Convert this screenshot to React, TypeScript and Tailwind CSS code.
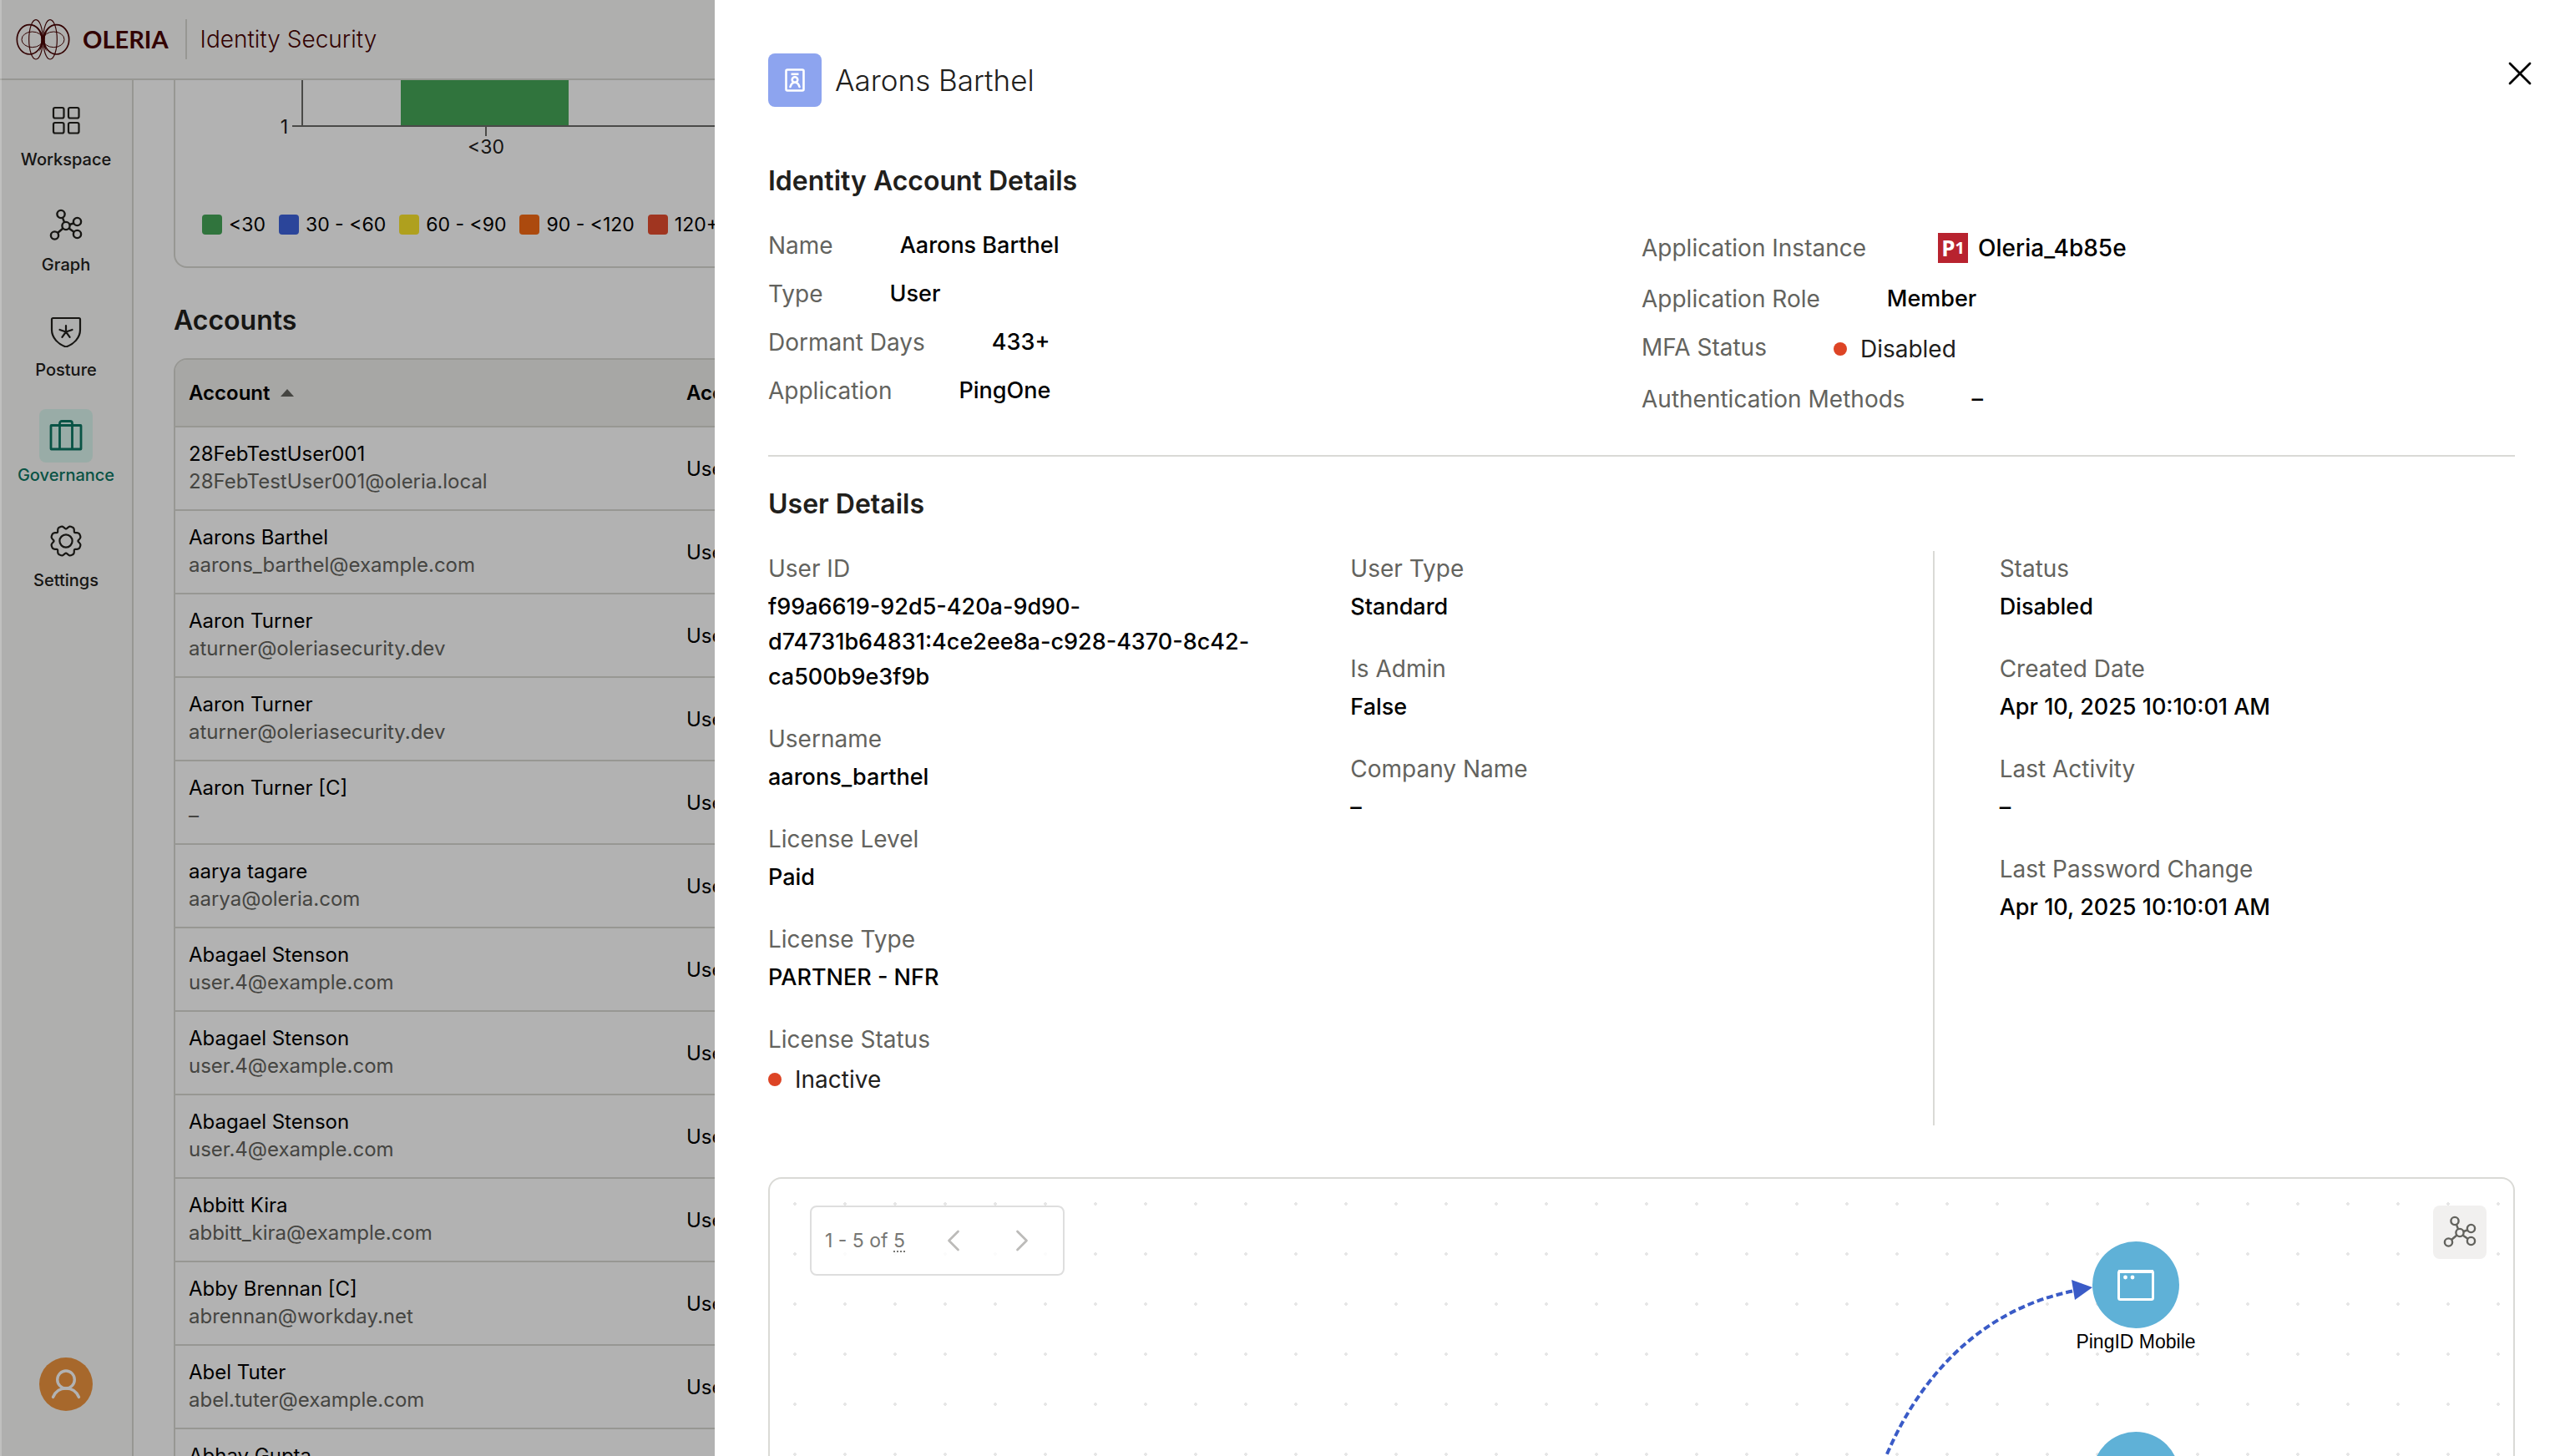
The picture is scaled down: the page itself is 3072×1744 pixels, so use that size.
import React from "react";
import { ChevronLeft, ChevronRight, X } from "lucide-react";

type IconProps = { className?: string };

function OleriaMark() {
  return (
    <svg viewBox="55 35 201 150" className="h-[50px] w-[67px]" fill="none" stroke="#490404" aria-hidden="true">
      <ellipse cx="107" cy="111" rx="45" ry="53" strokeWidth="5" />
      <ellipse cx="204" cy="111" rx="45" ry="53" strokeWidth="5" />
      <ellipse cx="117" cy="111" rx="38" ry="28" strokeWidth="3" />
      <ellipse cx="194" cy="111" rx="38" ry="28" strokeWidth="3" />
      <ellipse cx="130" cy="111" rx="25" ry="71" strokeWidth="3.5" />
      <ellipse cx="181" cy="111" rx="25" ry="71" strokeWidth="3.5" />
      <path d="M134 64C148 78 153 90 155.500 102C158 90 163 78 177 64C167 84 162 98 162 111C162 124 164 140 169 154C160 142 157 130 155.500 122C154 130 151 142 142 154C147 140 149 124 149 111C149 98 144 84 134 64Z" fill="#490404" stroke="none" />
    </svg>
  );
}

function WorkspaceIcon({ className }: IconProps) {
  return (
    <svg viewBox="0 0 40 40" className={className} fill="none" stroke="currentColor" strokeWidth="2.2">
      <rect x="5" y="5" width="12.500" height="12.500" rx="2" />
      <rect x="23" y="5" width="12.500" height="12.500" rx="2" />
      <rect x="5" y="23" width="12.500" height="12.500" rx="2" />
      <rect x="23" y="23" width="12.500" height="12.500" rx="2" />
    </svg>
  );
}

function GraphIcon({ className }: IconProps) {
  return (
    <svg viewBox="0 0 40 40" className={className} fill="none" stroke="currentColor" strokeWidth="2.4">
      <circle cx="14" cy="6.500" r="4.600" />
      <circle cx="20" cy="20.500" r="4.600" />
      <circle cx="33.500" cy="15.500" r="4.600" />
      <circle cx="33.500" cy="30.500" r="4.600" />
      <circle cx="6.500" cy="32" r="4.600" />
      <path d="M16 11l2 5M24.500 19l4.500-1.500M23.500 23.500l6 4.200M16.500 23.500L10 29" />
    </svg>
  );
}

function PostureIcon({ className }: IconProps) {
  return (
    <svg viewBox="0 0 40 40" className={className} fill="none" stroke="currentColor" strokeWidth="2.2" strokeLinecap="round" strokeLinejoin="round">
      <path d="M4.500 5H35.500a1.500 1.500 0 0 1 1.500 1.500V19C37 29 29 36.500 20 39.500C11 36.500 3 29 3 19V6.500A1.500 1.500 0 0 1 4.500 5Z" />
      <path d="M20 21.500V14M20 21.500l-7.500-2.500M20 21.500l7.500-2.500M20 21.500l-4.600 6.400M20 21.500l4.600 6.400" />
    </svg>
  );
}

function GovernanceIcon({ className }: IconProps) {
  return (
    <svg viewBox="0 0 40 40" className={className} fill="none" stroke="currentColor" strokeWidth="2.8" strokeLinejoin="round">
      <rect x="2" y="7.500" width="36" height="28.500" rx="0.500" />
      <path d="M12.500 36V5a2.500 2.500 0 0 1 2.500-2.500h10A2.500 2.500 0 0 1 27.500 5V36" />
    </svg>
  );
}

const gearOutline =
  "M" +
  Array.from({ length: 96 }, (_, i) => {
    const angle = (i / 96) * Math.PI * 2;
    const radius = 16.8 - 1.9 * Math.cos(8 * angle) - 0.5 * Math.cos(16 * angle);
    return `${(20 + radius * Math.cos(angle)).toFixed(2)} ${(20 + radius * Math.sin(angle)).toFixed(2)}`;
  }).join("L") +
  "Z";

function SettingsIcon({ className }: IconProps) {
  return (
    <svg viewBox="0 0 40 40" className={className} fill="none" stroke="currentColor" strokeWidth="2.200" strokeLinejoin="round">
      <path d={gearOutline} />
      <circle cx="20" cy="20" r="7.600" />
    </svg>
  );
}

function BadgeIcon({ className }: IconProps) {
  return (
    <svg viewBox="0 0 32 32" className={className} fill="none" stroke="white" strokeWidth="2.6" strokeLinecap="round">
      <rect x="5.500" y="3.500" width="21" height="25" rx="1.500" />
      <path d="M11.500 8.800h9" strokeLinecap="butt" />
      <circle cx="16" cy="15.500" r="3.300" />
      <path d="M10.500 24c1-3.500 3-5.200 5.500-5.200s4.500 1.700 5.500 5.200" />
    </svg>
  );
}

const navItems = [
  { label: "Workspace", Icon: WorkspaceIcon, active: false },
  { label: "Graph", Icon: GraphIcon, active: false },
  { label: "Posture", Icon: PostureIcon, active: false },
  { label: "Governance", Icon: GovernanceIcon, active: true },
  { label: "Settings", Icon: SettingsIcon, active: false },
];

const legend = [
  { label: "<30", color: "bg-[#46a658]" },
  { label: "30 - <60", color: "bg-[#3e63dd]" },
  { label: "60 - <90", color: "bg-[#fbe62c]" },
  { label: "90 - <120", color: "bg-[#f76b15]" },
  { label: "120+", color: "bg-[#e54d2e]" },
];

const accounts = [
  ["28FebTestUser001", "28FebTestUser001@oleria.local"],
  ["Aarons Barthel", "aarons_barthel@example.com"],
  ["Aaron Turner", "aturner@oleriasecurity.dev"],
  ["Aaron Turner", "aturner@oleriasecurity.dev"],
  ["Aaron Turner [C]", "–"],
  ["aarya tagare", "aarya@oleria.com"],
  ["Abagael Stenson", "user.4@example.com"],
  ["Abagael Stenson", "user.4@example.com"],
  ["Abagael Stenson", "user.4@example.com"],
  ["Abbitt Kira", "abbitt_kira@example.com"],
  ["Abby Brennan [C]", "abrennan@workday.net"],
  ["Abel Tuter", "abel.tuter@example.com"],
  ["Abhay Gupta", "abhay.gupta@example.com"],
];

function Header() {
  return (
    <header className="flex h-24 shrink-0 items-center border-b-2 border-[#d9d9d3] bg-[#fbfbf9] pl-[18px] text-[#490404]">
      <OleriaMark />
      <span className="ml-[14px] font-['Lato'] text-[29px] leading-10 font-bold">OLERIA</span>
      <span className="ml-5 h-12 w-0.5 bg-[#d9d9d3]" />
      <span className="ml-4 text-[28px] leading-10 font-light">Identity Security</span>
    </header>
  );
}

function Sidebar() {
  return (
    <nav className="flex w-40 shrink-0 flex-col items-center justify-between border-r-2 border-[#d9d9d3] bg-[#fbfbf9] pt-4 pb-[54px]">
      <ul className="flex flex-col gap-8">
        {navItems.map(({ label, Icon, active }) => (
          <li key={label}>
            <a href="#" className={`flex flex-col items-center ${active ? "text-[#0d7764]" : "text-[#21201c]"}`}>
              <span className={`flex size-16 items-center justify-center rounded-lg ${active ? "bg-[#dcf7ef]" : ""}`}>
                <Icon className="size-10" />
              </span>
              <span className="text-[20px] leading-[30px] font-medium">{label}</span>
            </a>
          </li>
        ))}
      </ul>
      <button aria-label="Profile" className="flex size-16 items-center justify-center rounded-full bg-[#f09640] text-white">
        <svg viewBox="0 0 40 40" className="size-10" fill="none" stroke="currentColor" strokeWidth="3.4" strokeLinecap="round">
          <ellipse cx="20" cy="14.500" rx="10.300" ry="10.500" />
          <path d="M4.500 35.500C7.500 28.500 13 25 20 25S32.500 28.500 35.500 35.500" />
        </svg>
      </button>
    </nav>
  );
}

function DormancyChart() {
  return (
    <section className="rounded-b-2xl border-2 border-t-0 border-[#d9d9d3] bg-white pb-[34px]">
      <svg className="block h-[157px] w-full" fill="none">
        <rect x="270" y="0" width="201" height="55" fill="#46a658" />
        <path d="M152 0V55M140 55H2600" stroke="#6b6b68" strokeWidth="2" />
        <path d="M372 56V67" stroke="#6b6b68" strokeWidth="2" />
        <text x="135" y="64" textAnchor="end" fontSize="23" fill="#21201c">1</text>
        <text x="372" y="88" textAnchor="middle" fontSize="23" fill="#21201c">&lt;30</text>
      </svg>
      <ul className="flex h-8 items-center gap-4 pl-8">
        {legend.map((item) => (
          <li key={item.label} className="flex items-center gap-2 text-[23px] leading-8 whitespace-nowrap">
            <span className={`size-6 rounded ${item.color}`} />
            {item.label}
          </li>
        ))}
      </ul>
    </section>
  );
}

function AccountsTable() {
  return (
    <section>
      <h2 className="mt-[43px] mb-[25px] text-[32px] leading-10 font-semibold text-[#21201c]">Accounts</h2>
      <div className="overflow-hidden rounded-t-2xl border-2 border-[#d9d9d3]">
        <table className="w-full table-fixed border-separate border-spacing-0 text-left text-[24px] leading-[33px]">
          <thead className="bg-[#f0f0ec]">
            <tr>
              <th className="h-[81px] w-[596px] border-b-2 border-[#d9d9d3] px-4 font-semibold">
                <button className="flex items-center gap-3">
                  Account
                  <svg viewBox="0 0 16 9" className="h-[9px] w-4" fill="#63635e" aria-hidden="true">
                    <path d="M8 0l8 9H0z" />
                  </svg>
                </button>
              </th>
              <th className="border-b-2 border-[#d9d9d3] px-4 font-semibold">Account Type</th>
            </tr>
          </thead>
          <tbody>
            {accounts.map(([name, email], index) => (
              <tr key={index}>
                <td className="h-[100px] border-b-2 border-[#d9d9d3] px-4 pb-0.5">
                  <div>{name}</div>
                  <div className="text-[#63635e]">{email}</div>
                </td>
                <td className="border-b-2 border-[#d9d9d3] px-4">User</td>
              </tr>
            ))}
          </tbody>
        </table>
      </div>
    </section>
  );
}

function Status({ children }: { children: React.ReactNode }) {
  return (
    <span className="flex h-[46px] items-center gap-4 text-[28px] font-normal text-[#21201c]">
      <span className="size-4 rounded-full bg-[#dd4425]" />
      {children}
    </span>
  );
}

function InlineField({ label, children }: { label: string; children: React.ReactNode }) {
  return (
    <div className="flex gap-20">
      <dt className="self-start text-[#63635e]">{label}</dt>
      <dd className="text-[27px] font-medium">{children}</dd>
    </div>
  );
}

function Field({ label, children }: { label: string; children: React.ReactNode }) {
  return (
    <div className="mb-8 flex flex-col gap-1">
      <dt className="text-[#63635e]">{label}</dt>
      <dd className="text-[27px] font-medium">{children}</dd>
    </div>
  );
}

function GraphNode({ label, className }: { label: string; className: string }) {
  return (
    <div className={`absolute flex w-52 flex-col items-center ${className}`}>
      <div className="flex size-[104px] items-center justify-center rounded-full bg-[#5fb1d7]">
        <svg viewBox="0 0 48 48" className="size-12" fill="none" stroke="white" strokeWidth="3">
          <rect x="3.500" y="7.500" width="41" height="34" rx="2" />
          <path d="M3 8h42" strokeWidth="4" />
          <circle cx="11.500" cy="15" r="2.400" fill="white" stroke="none" />
          <circle cx="20" cy="15" r="2.400" fill="white" stroke="none" />
        </svg>
      </div>
      <div className="font-['Liberation_Sans'] text-[23px] leading-8 whitespace-nowrap">{label}</div>
    </div>
  );
}

function AccessGraph() {
  return (
    <section className="relative mt-[62px] min-h-[700px] overflow-hidden rounded-2xl border-2 border-[#dadad6] bg-[radial-gradient(circle,#e6e6e6_2px,transparent_2px)] bg-size-[60px_60px]">
      <div className="absolute top-0 right-0 h-full w-[800px]">
        <svg className="absolute inset-0 size-full" fill="none">
          <path d="M36 363L49 332C90 235 165 155 275 134" stroke="#3a5bc7" strokeWidth="4" strokeDasharray="8 4" />
          <path d="M271 121L296 130L275 145Z" fill="#3a5bc7" />
        </svg>
        <GraphNode label="PingID Mobile" className="top-[75px] left-[244px]" />
        <GraphNode label="PingID Desktop" className="top-[303px] left-[244px]" />
      </div>
      <div className="absolute top-8 left-12 flex h-[84px] items-center rounded-lg border-2 border-[#dedede] bg-white/85 pl-4 text-[23px] text-[#777774]">
        <span className="w-[113px] leading-8 whitespace-nowrap">
          1 - 5 of <span className="underline decoration-dotted decoration-2 underline-offset-4">5</span>
        </span>
        <button aria-label="Previous page" className="flex h-16 w-[82px] items-center justify-center text-[#bcbbb9]">
          <ChevronLeft size={44} strokeWidth={1.5} />
        </button>
        <button aria-label="Next page" className="mr-2 flex h-16 w-[82px] items-center justify-center text-[#bcbbb9]">
          <ChevronRight size={44} strokeWidth={1.5} />
        </button>
      </div>
      <button aria-label="Open graph" className="absolute top-8 right-8 flex size-16 items-center justify-center rounded-lg bg-[#f1f0ef] text-[#63635e]">
        <GraphIcon className="size-10" />
      </button>
    </section>
  );
}

function AccountDrawer() {
  return (
    <aside role="dialog" aria-label="Aarons Barthel" className="fixed inset-y-0 right-0 left-[856px] overflow-hidden bg-white pt-16 pr-[60px] pl-16 text-[28px] leading-[42px]">
      <div className="flex items-center gap-4">
        <span className="flex size-16 items-center justify-center rounded-lg bg-[#8da4ef]">
          <BadgeIcon className="size-8" />
        </span>
        <h1 className="text-[35px] leading-[64px] font-light text-[#21201c]">Aarons Barthel</h1>
      </div>
      <button aria-label="Close" className="absolute top-16 right-[30px] flex size-12 items-center justify-center">
        <X size={50} strokeWidth={1.4} />
      </button>

      <h2 className="mt-[69px] text-[32px] leading-10 font-semibold text-[#21201c]">Identity Account Details</h2>
      <div className="mt-9 grid grid-cols-2 border-b-2 border-[#dadad6] pb-[46px]">
        <dl className="flex flex-col gap-4">
          <InlineField label="Name">Aarons Barthel</InlineField>
          <InlineField label="Type">User</InlineField>
          <InlineField label="Dormant Days">433+</InlineField>
          <InlineField label="Application">PingOne</InlineField>
        </dl>
        <dl className="flex flex-col gap-4">
          <div className="flex h-12 items-center gap-20">
            <dt className="text-[#63635e]">Application Instance</dt>
            <dd className="flex items-center gap-3 pl-1.5 text-[28px] font-medium">
              <span className="flex size-9 items-center justify-center bg-[#b8232f] font-['Open_Sans'] text-[26px] leading-9 font-bold text-white">
                P<span className="text-[20px]">1</span>
              </span>
              Oleria_4b85e
            </dd>
          </div>
          <InlineField label="Application Role">Member</InlineField>
          <InlineField label="MFA Status">
            <Status>Disabled</Status>
          </InlineField>
          <InlineField label="Authentication Methods">–</InlineField>
        </dl>
      </div>

      <h2 className="mt-[37px] text-[32px] leading-10 font-semibold text-[#21201c]">User Details</h2>
      <div className="mt-9 grid grid-cols-3">
        <dl className="pr-24">
          <Field label="User ID">
            <span className="wrap-anywhere">f99a6619-92d5-420a-9d90-d74731b64831:4ce2ee8a-c928-4370-8c42-ca500b9e3f9b</span>
          </Field>
          <Field label="Username">aarons_barthel</Field>
          <Field label="License Level">Paid</Field>
          <Field label="License Type">PARTNER - NFR</Field>
          <Field label="License Status">
            <Status>Inactive</Status>
          </Field>
        </dl>
        <dl>
          <Field label="User Type">Standard</Field>
          <Field label="Is Admin">False</Field>
          <Field label="Company Name">–</Field>
        </dl>
        <dl className="border-l-2 border-[#dadad6] pl-[78px]">
          <Field label="Status">Disabled</Field>
          <Field label="Created Date">Apr 10, 2025 10:10:01 AM</Field>
          <Field label="Last Activity">–</Field>
          <Field label="Last Password Change">Apr 10, 2025 10:10:01 AM</Field>
        </dl>
      </div>
      <AccessGraph />
    </aside>
  );
}

export default function App() {
  return (
    <div className="flex h-screen flex-col overflow-hidden bg-white font-['Inter',sans-serif] text-black">
      <Header />
      <div className="flex min-h-0 flex-1">
        <Sidebar />
        <main className="min-w-0 flex-1 overflow-hidden px-12">
          <DormancyChart />
          <AccountsTable />
        </main>
      </div>
      <div className="fixed inset-0 border-l-2 border-white/20 bg-black/30" />
      <AccountDrawer />
    </div>
  );
}
